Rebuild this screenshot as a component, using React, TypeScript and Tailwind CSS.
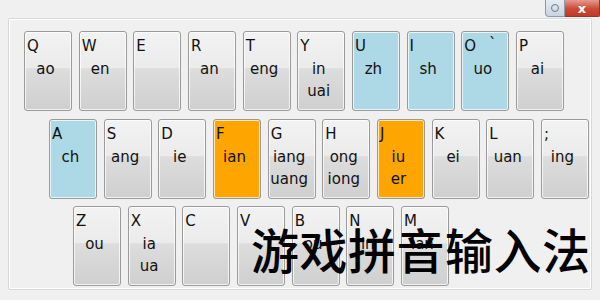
import React from "react";

type KeyDef = {
  k: string;
  lines?: string[];
  tone?: "gray" | "blue" | "orange";
  mark?: string;
};

const rows: { indent: string; keys: KeyDef[] }[] = [
  {
    indent: "pl-[15px]",
    keys: [
      { k: "Q", lines: ["ao"] },
      { k: "W", lines: ["en"] },
      { k: "E" },
      { k: "R", lines: ["an"] },
      { k: "T", lines: ["eng"] },
      { k: "Y", lines: ["in", "uai"] },
      { k: "U", lines: ["zh"], tone: "blue" },
      { k: "I", lines: ["sh"], tone: "blue" },
      { k: "O", lines: ["uo"], tone: "blue", mark: "`" },
      { k: "P", lines: ["ai"] },
    ],
  },
  {
    indent: "pl-[40px]",
    keys: [
      { k: "A", lines: ["ch"], tone: "blue" },
      { k: "S", lines: ["ang"] },
      { k: "D", lines: ["ie"] },
      { k: "F", lines: ["ian"], tone: "orange" },
      { k: "G", lines: ["iang", "uang"] },
      { k: "H", lines: ["ong", "iong"] },
      { k: "J", lines: ["iu", "er"], tone: "orange" },
      { k: "K", lines: ["ei"] },
      { k: "L", lines: ["uan"] },
      { k: ";", lines: ["ing"] },
    ],
  },
  {
    indent: "pl-[64px]",
    keys: [
      { k: "Z", lines: ["ou"] },
      { k: "X", lines: ["ia", "ua"] },
      { k: "C" },
      { k: "V" },
      { k: "B", lines: ["ou"] },
      { k: "N", lines: ["in"] },
      { k: "M", lines: ["ian"] },
    ],
  },
];

const toneClass = {
  gray: "bg-[linear-gradient(to_bottom,#f2f2f2_0%,#ebebeb_46%,#dddddd_47%,#cfcfcf_100%)]",
  blue: "bg-[#add8e6]",
  orange: "bg-[#ffa500]",
};

function Key({ def }: { def: KeyDef }) {
  const tone = def.tone ?? "gray";
  return (
    <div
      className={`w-[48px] h-[80px] shrink-0 rounded-[3px] border border-[#9a9a9a] shadow-[inset_0_0_0_1px_rgba(255,255,255,0.75)] ${toneClass[tone]} flex flex-col text-[15px] leading-[22px] text-[#111]`}
    >
      <div className="pl-[2px] pt-[3px] flex">
        <span>{def.k}</span>
        {def.mark && <span className="ml-[13px] -mt-[2px]">{def.mark}</span>}
      </div>
      <div className="mt-[1px] pr-[5px] text-center">
        {(def.lines ?? []).map((l) => (
          <div key={l}>{l}</div>
        ))}
      </div>
    </div>
  );
}

export default function App() {
  return (
    <div
      className="relative w-[600px] h-[300px] bg-[#f0f0f0] overflow-hidden"
      style={{ fontFamily: '"DejaVu Sans", "Noto Sans CJK SC", sans-serif' }}
    >
      {/* title buttons */}
      <div className="flex justify-end h-[18px]">
        <div className="flex h-[17px]">
          <div className="w-[20px] h-[17px] rounded-bl-[4px] border border-t-0 border-[#8d9aae] bg-[linear-gradient(to_bottom,#e6ecf3,#c9d4e1)] flex items-center justify-center">
            <div className="w-[8px] h-[8px] rounded-full border border-[#6d7786]" />
          </div>
          <div className="w-[35px] h-[17px] rounded-br-[2px] border border-t-0 border-l-0 border-[#8a3a2e] bg-[linear-gradient(to_bottom,#e39b8e,#cc4a36_55%,#c23a25)] flex items-center justify-center">
            <span className="text-white font-bold text-[13px] leading-none">x</span>
          </div>
        </div>
      </div>

      {/* keyboard panel */}
      <div className="mx-[8px] h-[272px] border border-[#d6d9dc] rounded-[2px] shadow-[inset_0_0_0_1px_#ffffff] pt-[12px] flex flex-col gap-[7.5px]">
        {rows.map((row, i) => (
          <div key={i} className={`flex gap-[6.67px] ${row.indent}`}>
            {row.keys.map((def) => (
              <Key key={def.k} def={def} />
            ))}
          </div>
        ))}
      </div>

      {/* title overlay */}
      <div
        className="absolute left-[251px] top-[224px] text-[48px] leading-[48px] tracking-[0.5px] font-medium text-black whitespace-nowrap"
        style={{ fontFamily: '"Noto Sans CJK SC", sans-serif' }}
      >
        游戏拼音输入法
      </div>
    </div>
  );
}
